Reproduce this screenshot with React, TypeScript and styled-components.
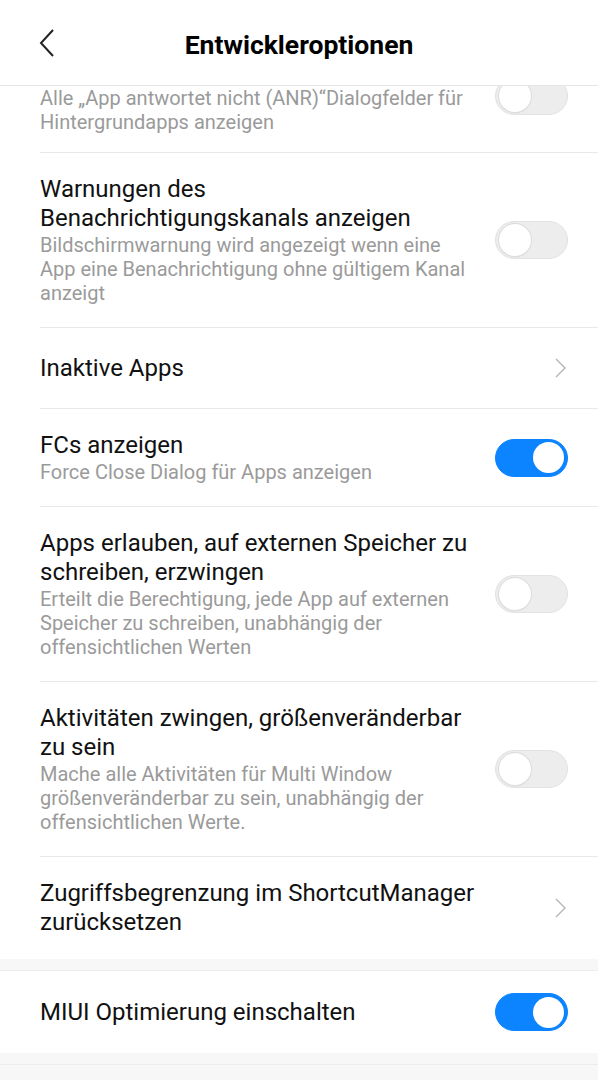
import React from 'react';
import styled, { createGlobalStyle } from 'styled-components';

const GlobalStyle = createGlobalStyle`
  html, body {
    margin: 0;
    padding: 0;
    background: #f7f7f7;
    font-family: Roboto, 'Noto Sans', sans-serif;
    -webkit-font-smoothing: antialiased;
  }
`;

const Screen = styled.div`
  width: 598px;
  height: 1080px;
  display: flex;
  flex-direction: column;
  background: #f7f7f7;
  overflow: hidden;
`;

const Header = styled.header`
  height: 85px;
  flex-shrink: 0;
  display: grid;
  grid-template-columns: 80px 1fr 80px;
  align-items: center;
  background: #fff;
  border-bottom: 1px solid #e6e6e6;
  position: relative;
  z-index: 1;
`;

const BackButton = styled.button`
  border: 0;
  background: none;
  padding: 0 0 0 38px;
  height: 40px;
  display: flex;
  align-items: center;
  cursor: pointer;
`;

const Title = styled.h1`
  margin: 4px 0 0;
  text-align: center;
  font-size: 26.5px;
  font-weight: 700;
  color: #000;
`;

const Viewport = styled.div`
  overflow: hidden;
  flex-shrink: 0;
`;

const Section = styled.section<{ $offset?: number }>`
  background: #fff;
  margin-top: ${(p) => (p.$offset ? `${p.$offset}px` : '0')};
`;

const Gap = styled.div`
  height: 11px;
  background: #f7f7f7;
  border-bottom: 1px solid #ececec;
`;

const Row = styled.div<{ $last?: boolean; $tight?: boolean }>`
  margin-left: 40px;
  padding: 22px 30px ${(p) => (p.$tight ? 18 : 22)}px 0;
  min-height: 36px;
  display: flex;
  align-items: center;
  gap: 18px;
  border-bottom: ${(p) => (p.$last ? 'none' : '1px solid #e8e8e8')};
`;

const Texts = styled.div`
  flex: 1;
  min-width: 0;
`;

const RowTitle = styled.div`
  font-size: 24px;
  line-height: 29px;
  color: #111;
`;

const RowSub = styled.div`
  font-size: 20px;
  line-height: 24px;
  color: #9a9a9a;
`;

const Track = styled.div<{ $on: boolean }>`
  width: 73px;
  height: 38px;
  box-sizing: border-box;
  border-radius: 19px;
  flex-shrink: 0;
  display: flex;
  align-items: center;
  justify-content: ${(p) => (p.$on ? 'flex-end' : 'flex-start')};
  padding: 0 3px;
  background: ${(p) => (p.$on ? '#0d84ff' : '#ededed')};
  border: 1px solid ${(p) => (p.$on ? '#0d84ff' : '#e2e2e2')};
`;

const Knob = styled.div<{ $on: boolean }>`
  width: ${(p) => (p.$on ? 31 : 32)}px;
  height: ${(p) => (p.$on ? 31 : 32)}px;
  border-radius: 50%;
  background: #fff;
  box-shadow: ${(p) => (p.$on ? 'none' : '0 0 0 1px #dcdcdc, 0 1px 2px rgba(0,0,0,0.08)')};
`;

const ChevronIcon = styled.svg`
  flex-shrink: 0;
`;

const Chevron = () => (
  <ChevronIcon width="14" height="22" viewBox="0 0 14 22">
    <path d="M2 2 L11 11 L2 20" fill="none" stroke="#b5b5b5" strokeWidth="1.4" />
  </ChevronIcon>
);

const Toggle = ({ on }: { on: boolean }) => (
  <Track $on={on}>
    <Knob $on={on} />
  </Track>
);

type Item = {
  title: string;
  sub?: string;
  kind: 'toggle' | 'link';
  on?: boolean;
};

const items: Item[] = [
  {
    title: 'Alle ANRs anzeigen',
    sub: 'Alle „App antwortet nicht (ANR)“Dialogfelder für Hintergrundapps anzeigen',
    kind: 'toggle',
  },
  {
    title: 'Warnungen des Benachrichtigungskanals anzeigen',
    sub: 'Bildschirmwarnung wird angezeigt wenn eine App eine Benachrichtigung ohne gültigem Kanal anzeigt',
    kind: 'toggle',
  },
  { title: 'Inaktive Apps', kind: 'link' },
  { title: 'FCs anzeigen', sub: 'Force Close Dialog für Apps anzeigen', kind: 'toggle', on: true },
  {
    title: 'Apps erlauben, auf externen Speicher zu schreiben, erzwingen',
    sub: 'Erteilt die Berechtigung, jede App auf externen Speicher zu schreiben, unabhängig der offensichtlichen Werten',
    kind: 'toggle',
  },
  {
    title: 'Aktivitäten zwingen, größenveränderbar zu sein',
    sub: 'Mache alle Aktivitäten für Multi Window größenveränderbar zu sein, unabhängig der offensichtlichen Werte.',
    kind: 'toggle',
  },
  { title: 'Zugriffsbegrenzung im ShortcutManager zurücksetzen', kind: 'link' },
];

const SettingRow = ({ item, last, tight }: { item: Item; last?: boolean; tight?: boolean }) => (
  <Row $last={last} $tight={tight}>
    <Texts>
      <RowTitle>{item.title}</RowTitle>
      {item.sub && <RowSub>{item.sub}</RowSub>}
    </Texts>
    {item.kind === 'toggle' ? <Toggle on={!!item.on} /> : <Chevron />}
  </Row>
);

const App = () => (
  <Screen>
    <GlobalStyle />
    <Header>
      <BackButton aria-label="Zurück">
        <svg width="18" height="30" viewBox="0 0 18 30">
          <path d="M15 2 L3 15 L15 28" fill="none" stroke="#222" strokeWidth="2" />
        </svg>
      </BackButton>
      <Title>Entwickleroptionen</Title>
      <div />
    </Header>
    <Viewport>
      {/* list is scrolled: the first row's title sits under the header */}
      <Section $offset={-51}>
        {items.map((it, i) => (
          <SettingRow key={it.title} item={it} tight={i === 0} last={i === items.length - 1} />
        ))}
      </Section>
      <Gap />
      <Section>
        <SettingRow item={{ title: 'MIUI Optimierung einschalten', kind: 'toggle', on: true }} last />
      </Section>
      <Gap />
    </Viewport>
  </Screen>
);

export default App;
